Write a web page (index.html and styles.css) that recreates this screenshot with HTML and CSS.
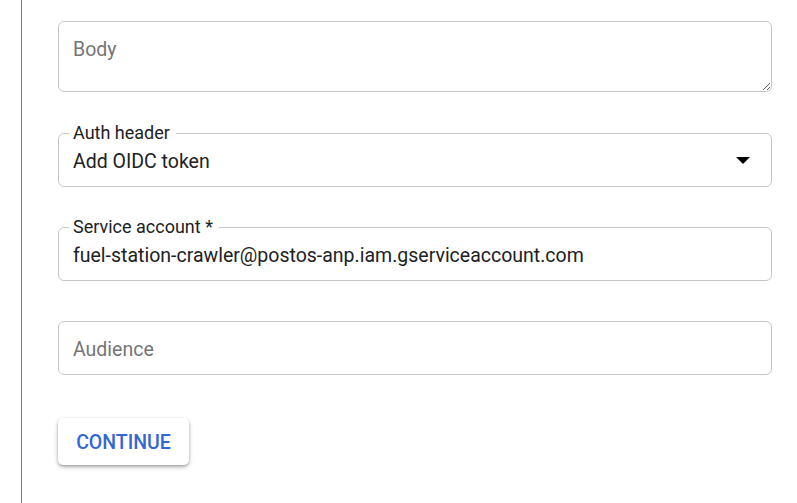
FILE: index.html
```html
<!DOCTYPE html>
<html>
<head>
<meta charset="utf-8">
<link rel="stylesheet" href="styles.css">
</head>
<body>
<div class="page">
  <div class="rail"></div>
  <div class="content">
    <div class="field field-area">
      <textarea class="area" placeholder="Body"></textarea>
    </div>
    <div class="field field-select">
      <span class="label">Auth header</span>
      <span class="value">Add OIDC token</span>
      <svg class="caret" width="14" height="7" viewBox="0 0 14 7"><path d="M0 0 L14 0 L7 7 Z" fill="#000"/></svg>
    </div>
    <div class="field">
      <span class="label">Service account *</span>
      <span class="value">fuel-station-crawler@postos-anp.iam.gserviceaccount.com</span>
    </div>
    <div class="field">
      <span class="placeholder">Audience</span>
    </div>
    <div class="actions">
      <button class="btn">CONTINUE</button>
    </div>
  </div>
</div>
</body>
</html>
```

FILE: styles.css
```css
html, body {
  margin: 0;
  padding: 0;
  background: #fff;
  font-family: Roboto, "Liberation Sans", sans-serif;
}
.page {
  display: flex;
  min-height: 503px;
}
.rail {
  width: 21px;
  border-right: 1px solid #808080;
  flex: none;
}
.content {
  padding: 21px 0 0 36px;
  width: 714px;
  display: flex;
  flex-direction: column;
  gap: 40px;
}
.field {
  position: relative;
  border: 1px solid #c6c6c6;
  border-radius: 6px;
  height: 54px;
  box-sizing: border-box;
  display: flex;
  align-items: center;
  padding: 0 14px;
  font-size: 19.5px;
  color: #202124;
}
.field-area {
  height: 71px;
  padding: 0;
  align-items: stretch;
  margin-bottom: 1px;
}
.area {
  flex: 1;
  border: none;
  outline: none;
  resize: vertical;
  border-radius: 6px;
  font-family: Roboto, "Liberation Sans", sans-serif;
  font-size: 19.5px;
  padding: 16px 14px 0;
  margin: 0;
  background: transparent;
  color: #202124;
}
.area::placeholder {
  color: #757575;
}
.label {
  position: absolute;
  top: -12px;
  left: 10px;
  padding: 0 6px 0 4px;
  background: #fff;
  font-size: 18px;
  line-height: 22px;
  color: #202124;
}
.value {
  line-height: 24px;
  padding-top: 4px;
}
.placeholder {
  color: #757575;
  line-height: 24px;
  padding-top: 4px;
}
.field-select {
  justify-content: space-between;
  padding-right: 21px;
}
.caret {
  display: block;
}
.actions {
  padding-top: 3px;
}
.btn {
  width: 131px;
  height: 47px;
  border: none;
  border-radius: 5px;
  background: #fff;
  box-shadow: 0 2px 4px rgba(0,0,0,0.3), 0 1px 2px rgba(0,0,0,0.15);
  color: #3367d6;
  font-family: Roboto, "Liberation Sans", sans-serif;
  font-size: 19.5px;
  font-weight: 500;
  letter-spacing: 0;
  padding: 2px 0 0;
}
```
